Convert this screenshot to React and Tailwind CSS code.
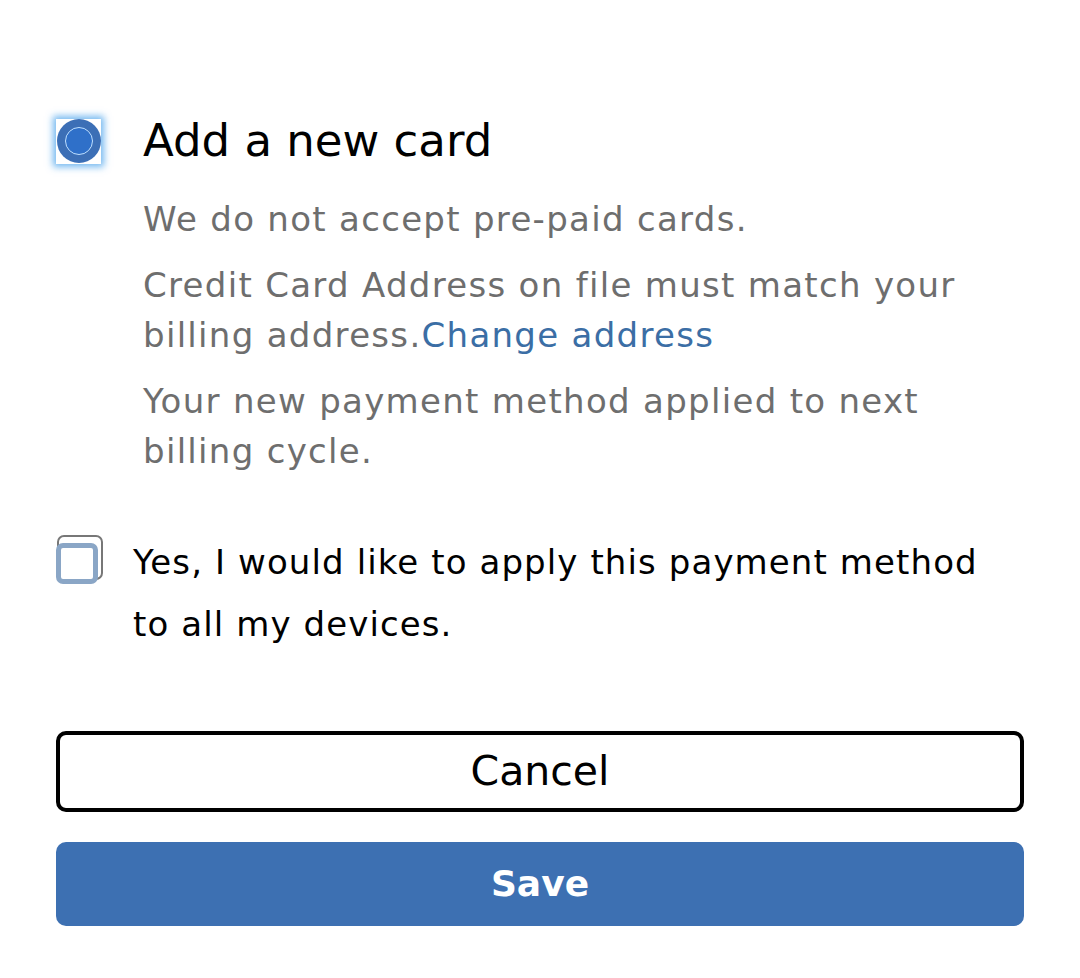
import React from "react";

export default function App() {
  return (
    <div
      className="w-[1080px] h-[978px] bg-white px-[56px] pt-[117px]"
      style={{ fontFamily: "'DejaVu Sans', 'Liberation Sans', sans-serif" }}
    >
      {/* Add a new card */}
      <div className="flex items-center">
        <div className="w-[45px] h-[45px] bg-white shadow-[0_0_7px_3px_rgba(70,160,235,0.75)] flex items-center justify-center">
          <div className="w-[44px] h-[44px] rounded-full bg-[#3c6fb6] flex items-center justify-center">
            <div className="w-[28px] h-[28px] rounded-full border-[1.5px] border-[#bfe0ff] bg-[#2f70c9]" />
          </div>
        </div>
        <span className="ml-[42px] text-[45px] leading-[48px] text-black">Add a new card</span>
      </div>

      <div className="pl-[87px] mt-[29px] text-[34px] leading-[50px] tracking-[1.3px] text-[#6e6e6e]">
        <p>We do not accept pre-paid cards.</p>
        <p className="mt-[16px]">
          Credit Card Address on file must match your billing address.
          <a className="text-[#3b6ea5]">Change address</a>
        </p>
        <p className="mt-[16px]">
          Your new payment method applied to next billing cycle.
        </p>
      </div>

      {/* Apply to all devices */}
      <div className="flex items-start mt-[59px]">
        <div className="relative w-[47px] h-[49px] shrink-0">
          <div className="absolute left-[1px] top-0 w-[46px] h-[45px] rounded-[7px] border-[2px] border-[#777777]" />
          <div className="absolute left-0 top-[8px] w-[42px] h-[41px] rounded-[7px] border-[5px] border-[#8aa6c6] bg-white" />
        </div>
        <p className="ml-[30px] -mt-[4px] w-[870px] text-[34px] leading-[62px] tracking-[1.1px] text-black">
          Yes, I would like to apply this payment method to all my devices.
        </p>
      </div>

      {/* Buttons */}
      <button className="mt-[76px] w-full h-[81px] rounded-[10px] border-[4px] border-black bg-white text-[41px] text-black">
        Cancel
      </button>
      <button className="mt-[30px] w-full h-[84px] rounded-[10px] bg-[#3d70b2] text-[36px] font-bold text-white">
        Save
      </button>
    </div>
  );
}
